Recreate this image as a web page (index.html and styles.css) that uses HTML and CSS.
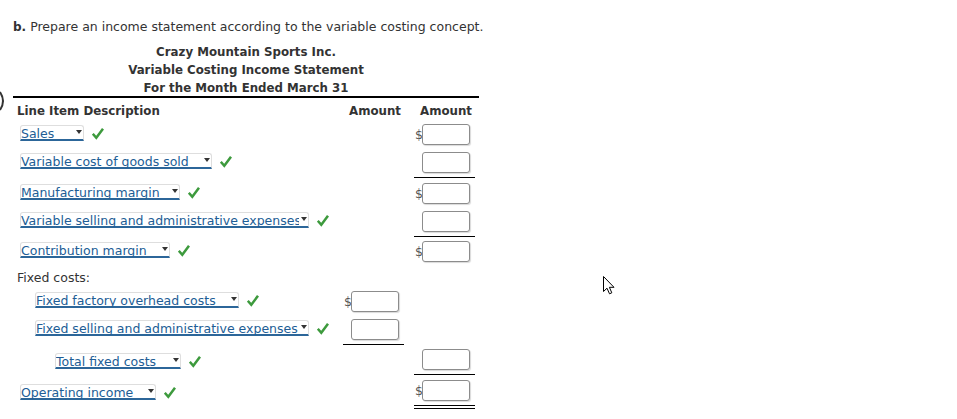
FILE: index.html
```html
<!DOCTYPE html>
<html>
<head>
<meta charset="utf-8">
<link rel="stylesheet" href="styles.css">
</head>
<body>
<div class="page">
  <svg class="paren" width="6" height="20" viewBox="0 0 6 20"><path d="M0 1 Q6 10 0 19" fill="none" stroke="#333" stroke-width="2"/></svg>
  <p class="prompt"><b>b.</b> Prepare an income statement according to the variable costing concept.</p>
  <div class="sheet">
    <div class="titles">
      <div>Crazy Mountain Sports Inc.</div>
      <div>Variable Costing Income Statement</div>
      <div>For the Month Ended March 31</div>
    </div>
    <div class="table">
      <div class="row head">
        <div class="desc">Line Item Description</div>
        <div class="c1">Amount</div>
        <div class="c2">Amount</div>
      </div>

      <div class="row r28">
        <div class="desc lv0"><span class="sel w64"><span class="txt">Sales</span><i class="arr"></i></span><svg class="ck" viewBox="0 0 12 12"><path d="M0.8 5.8 L4.3 9.8 L11 0.8"/></svg></div>
        <div class="c1"></div>
        <div class="c2"><span class="amt"><span class="dol">$</span><span class="box"></span></span></div>
      </div>

      <div class="row r31">
        <div class="desc lv0"><span class="sel w192"><span class="txt">Variable cost of goods sold</span><i class="arr"></i></span><svg class="ck" viewBox="0 0 12 12"><path d="M0.8 5.8 L4.3 9.8 L11 0.8"/></svg></div>
        <div class="c1"></div>
        <div class="c2"><span class="amt ul"><span class="dol"></span><span class="box"></span></span></div>
      </div>

      <div class="row r28">
        <div class="desc lv0"><span class="sel w160"><span class="txt">Manufacturing margin</span><i class="arr"></i></span><svg class="ck" viewBox="0 0 12 12"><path d="M0.8 5.8 L4.3 9.8 L11 0.8"/></svg></div>
        <div class="c1"></div>
        <div class="c2"><span class="amt"><span class="dol">$</span><span class="box"></span></span></div>
      </div>

      <div class="row r30">
        <div class="desc lv0"><span class="sel w289"><span class="txt">Variable selling and administrative expenses</span><i class="arr"></i></span><svg class="ck" viewBox="0 0 12 12"><path d="M0.8 5.8 L4.3 9.8 L11 0.8"/></svg></div>
        <div class="c1"></div>
        <div class="c2"><span class="amt ul"><span class="dol"></span><span class="box"></span></span></div>
      </div>

      <div class="row r28">
        <div class="desc lv0"><span class="sel w150"><span class="txt">Contribution margin</span><i class="arr"></i></span><svg class="ck" viewBox="0 0 12 12"><path d="M0.8 5.8 L4.3 9.8 L11 0.8"/></svg></div>
        <div class="c1"></div>
        <div class="c2"><span class="amt"><span class="dol">$</span><span class="box"></span></span></div>
      </div>

      <div class="row label">
        <div class="desc">Fixed costs:</div>
      </div>

      <div class="row r28">
        <div class="desc lv1"><span class="sel w204"><span class="txt">Fixed factory overhead costs</span><i class="arr"></i></span><svg class="ck" viewBox="0 0 12 12"><path d="M0.8 5.8 L4.3 9.8 L11 0.8"/></svg></div>
        <div class="c1"><span class="amt"><span class="dol">$</span><span class="box"></span></span></div>
        <div class="c2"></div>
      </div>

      <div class="row r30">
        <div class="desc lv1"><span class="sel w274"><span class="txt">Fixed selling and administrative expenses</span><i class="arr"></i></span><svg class="ck" viewBox="0 0 12 12"><path d="M0.8 5.8 L4.3 9.8 L11 0.8"/></svg></div>
        <div class="c1"><span class="amt ul"><span class="dol"></span><span class="box"></span></span></div>
        <div class="c2"></div>
      </div>

      <div class="row r31">
        <div class="desc lv2 low"><span class="sel w126"><span class="txt">Total fixed costs</span><i class="arr"></i></span><svg class="ck" viewBox="0 0 12 12"><path d="M0.8 5.8 L4.3 9.8 L11 0.8"/></svg></div>
        <div class="c1"></div>
        <div class="c2"><span class="amt ul"><span class="dol"></span><span class="box"></span></span></div>
      </div>

      <div class="row r31">
        <div class="desc lv0 low"><span class="sel w136"><span class="txt">Operating income</span><i class="arr"></i></span><svg class="ck" viewBox="0 0 12 12"><path d="M0.8 5.8 L4.3 9.8 L11 0.8"/></svg></div>
        <div class="c1"></div>
        <div class="c2"><span class="amt dbl"><span class="dol">$</span><span class="box"></span></span></div>
      </div>
    </div>
  </div>
  <svg class="cursor" width="13" height="19" viewBox="0 0 13 19"><path d="M0.5 0.5 L0.5 15.5 L4 12.2 L6.5 17.8 L8.8 16.8 L6.4 11.3 L11 11.3 Z" fill="#fff" stroke="#000" stroke-width="1" stroke-linejoin="miter"/></svg>
</div>
</body>
</html>
```

FILE: styles.css
```css
* { box-sizing: border-box; }
html, body { margin: 0; padding: 0; background: #fff; }
body {
  font-family: "DejaVu Sans", Verdana, sans-serif;
  font-size: 12.5px;
  color: #333;
}
.page {
  position: relative;
  width: 957px;
  height: 419px;
  padding: 19px 0 0 13px;
  overflow: hidden;
}
.paren { position: absolute; left: 0; top: 91px; }
.cursor { position: absolute; left: 603px; top: 276px; }
.prompt { margin: 0; line-height: 15px; }
.prompt b { font-size: 12px; }
.sheet { width: 466px; margin-top: 7px; }
.titles {
  height: 54px;
  padding-top: 1px;
  text-align: center;
  font-weight: bold;
  font-size: 11.8px;
  line-height: 18px;
}
.table { border-top: 2px solid #000; }
.row { display: flex; align-items: flex-start; }
.desc { width: 327px; display: flex; align-items: center; }
.c1 { width: 67px; }
.c2 { width: 72px; }
.head {
  height: 23px;
  padding-top: 3px;
  line-height: 20px;
  font-weight: bold;
  font-size: 11.8px;
}
.head .desc { padding-left: 4px; }
.head .c1 { text-align: right; padding-right: 6px; }
.head .c2 { text-align: right; padding-right: 7px; }
.r28 { height: 28px; }
.r30 { height: 30px; }
.r31 { height: 31px; }
.label { height: 22px; padding-top: 1px; line-height: 21px; }
.label .desc { padding-left: 4px; }
.desc.lv0 { padding: 4px 0 0 7px; }
.desc.lv1 { padding: 4px 0 0 22px; }
.desc.lv2 { padding: 4px 0 0 42px; }
.desc.low { padding-top: 7px; }

.sel {
  display: flex;
  align-items: flex-start;
  height: 16px;
  padding: 1px 1px 0 0;
  border: 1px solid #dedede;
  border-bottom: 2px solid #2c6699;
  border-radius: 3px 3px 0 0;
  background: #fff;
  color: #215d95;
  line-height: 13px;
}
.txt { flex: 1; overflow: hidden; white-space: nowrap; }
.arr {
  flex: none;
  width: 0;
  height: 0;
  margin: 3px 0 0 2px;
  border-left: 3.5px solid transparent;
  border-right: 3.5px solid transparent;
  border-top: 4px solid #333;
}
.w64 { width: 64px; }
.w192 { width: 192px; }
.w160 { width: 160px; }
.w289 { width: 289px; }
.w150 { width: 150px; }
.w204 { width: 204px; }
.w274 { width: 274px; }
.w126 { width: 126px; }
.w136 { width: 136px; }
.ck {
  width: 12px;
  height: 12px;
  margin: 1px 0 0 8px;
  fill: none;
  stroke: #3d9a3d;
  stroke-width: 2.5;
}
.amt {
  display: flex;
  align-items: center;
  width: 61px;
  padding: 3px 5px 4px 1px;
}
.c1 .amt { margin-left: 3px; }
.c2 .amt { margin-left: 7px; }
.amt.ul { border-bottom: 1px solid #000; }
.amt.dbl { border-bottom: 4px double #000; }
.dol { width: 7px; flex: none; color: #555; line-height: 14px; }
.box {
  width: 48px;
  height: 21px;
  border: 1px solid #8c8c8c;
  border-radius: 3px;
  background: #fff;
  box-shadow: 1px 1px 1px rgba(0, 0, 0, 0.15);
}
```
